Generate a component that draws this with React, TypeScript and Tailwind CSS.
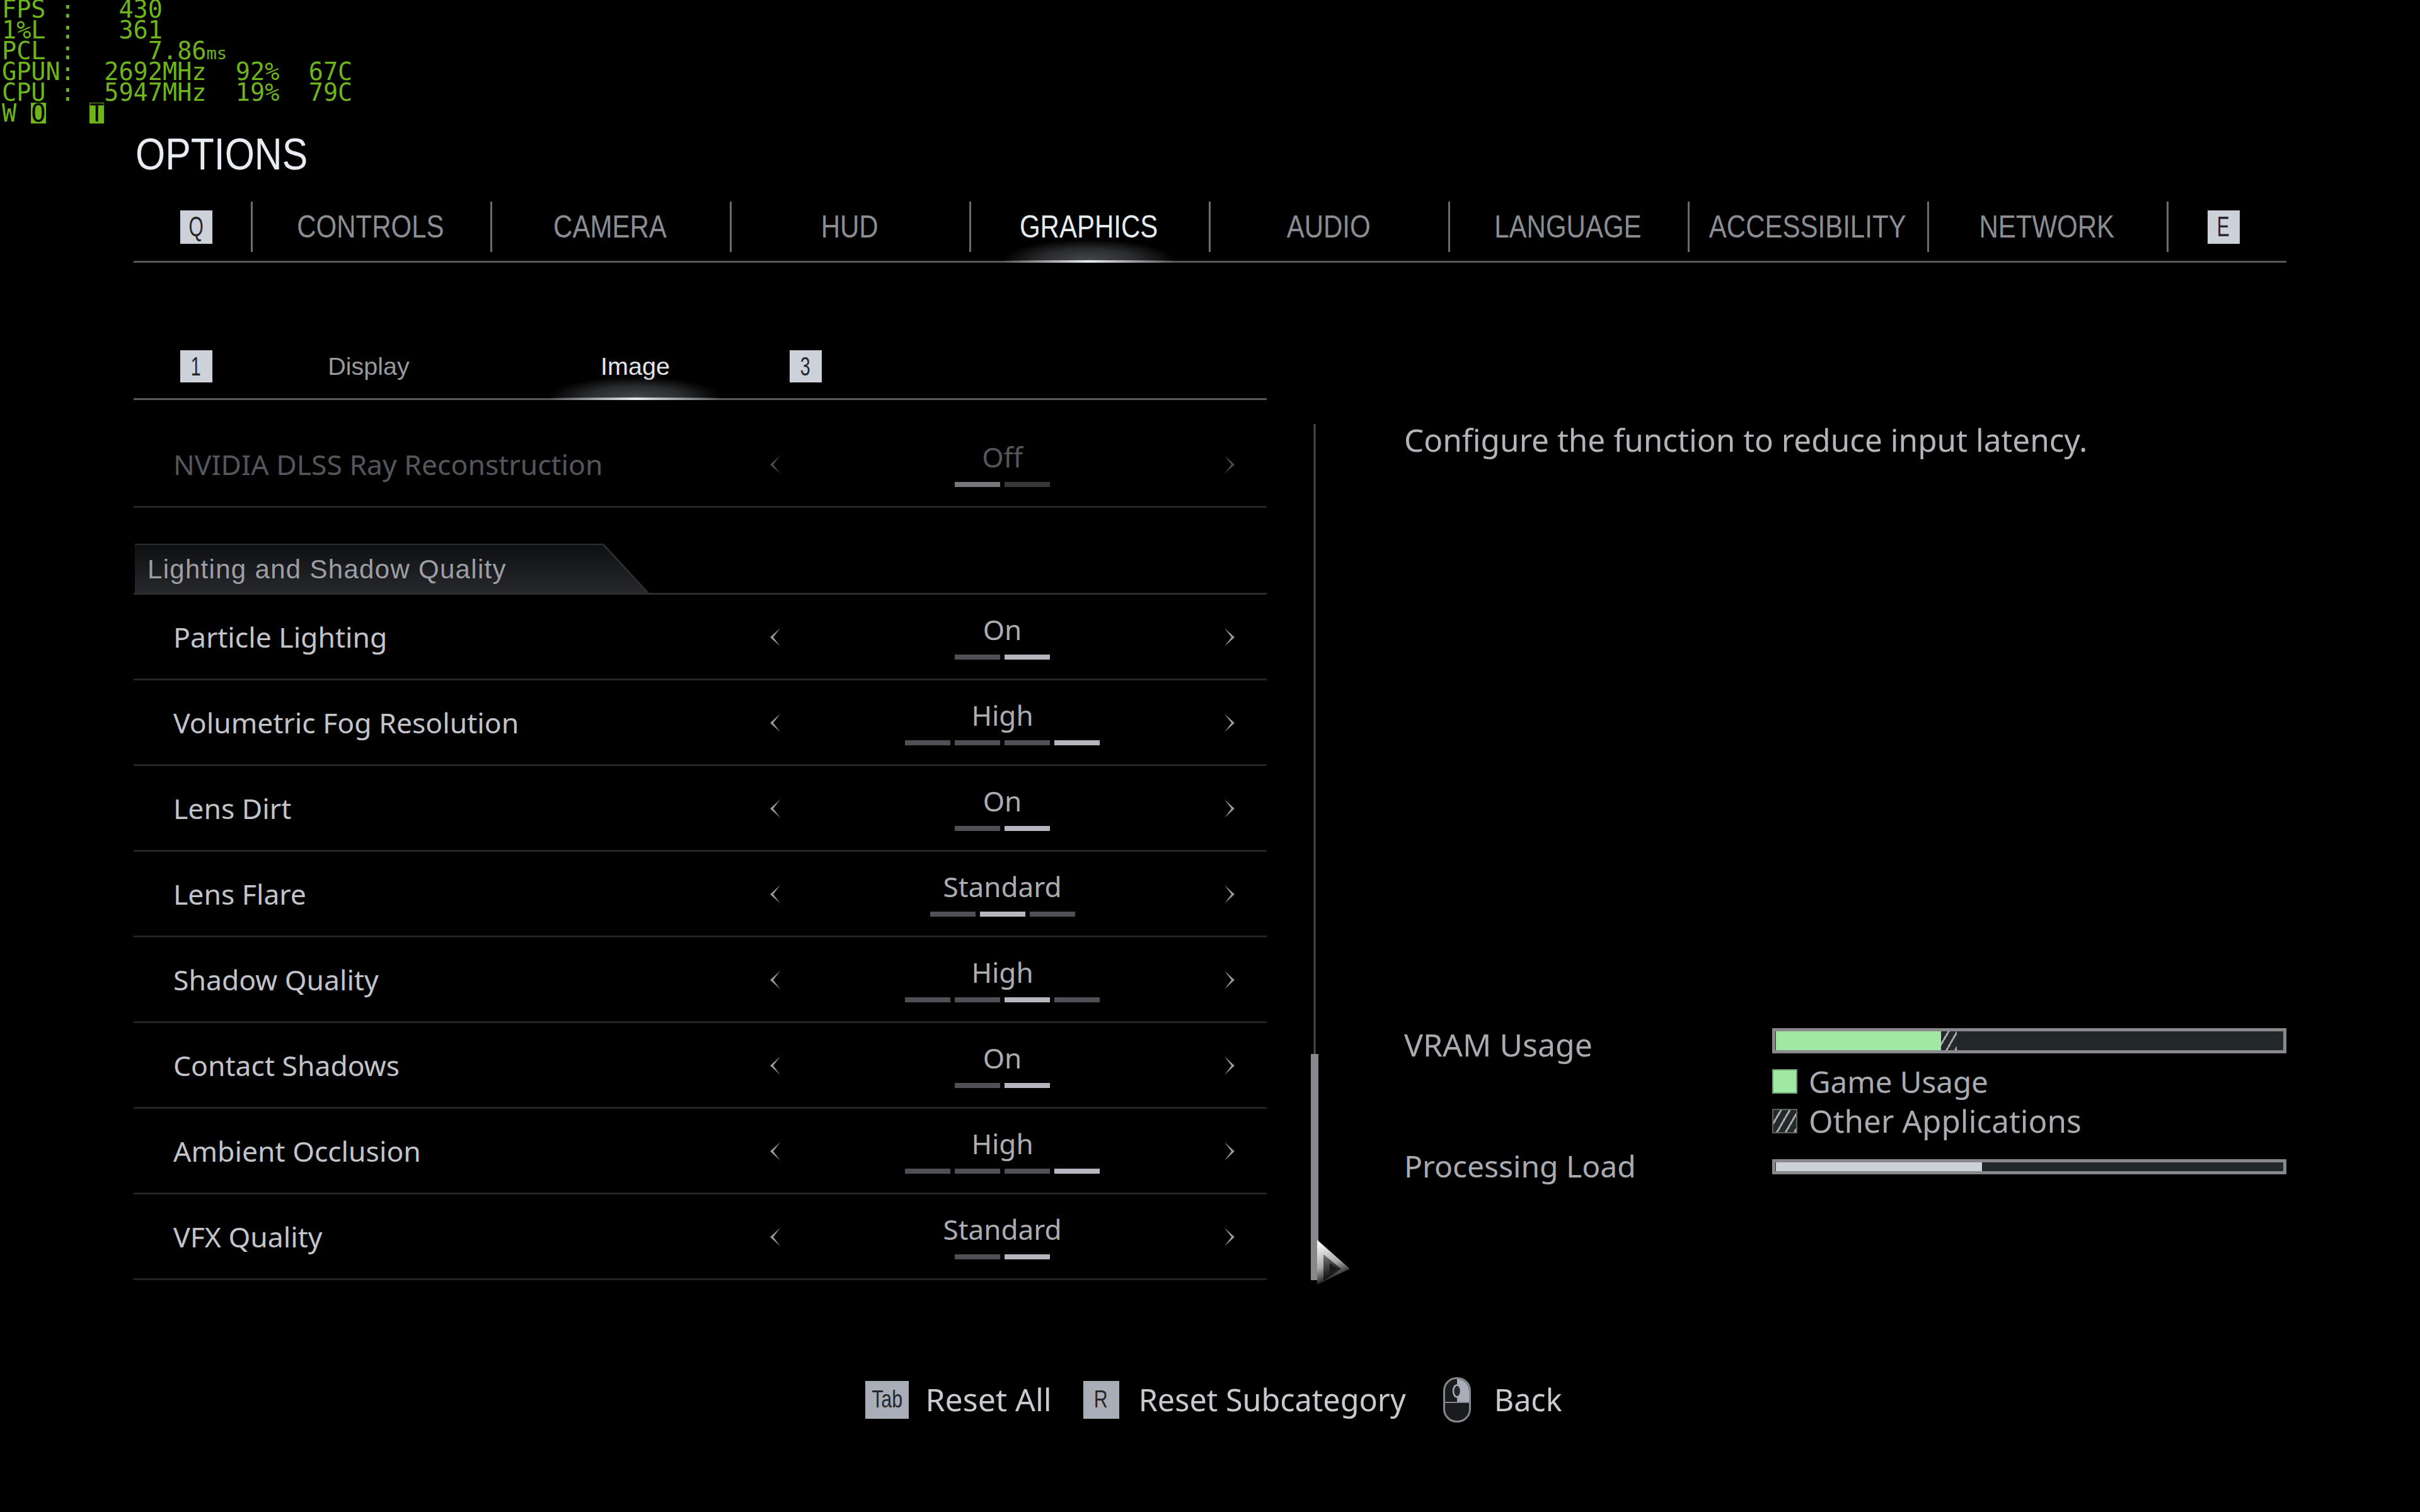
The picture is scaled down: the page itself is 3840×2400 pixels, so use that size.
const SQUARE = "font-['Liberation_Sans',sans-serif]";

const mainTabs = ["CONTROLS", "CAMERA", "HUD", "GRAPHICS", "AUDIO", "LANGUAGE", "ACCESSIBILITY", "NETWORK"];

const rows = [
  { label: "Particle Lighting", value: "On", segs: 2, active: 1 },
  { label: "Volumetric Fog Resolution", value: "High", segs: 4, active: 3 },
  { label: "Lens Dirt", value: "On", segs: 2, active: 1 },
  { label: "Lens Flare", value: "Standard", segs: 3, active: 1 },
  { label: "Shadow Quality", value: "High", segs: 4, active: 2 },
  { label: "Contact Shadows", value: "On", segs: 2, active: 1 },
  { label: "Ambient Occlusion", value: "High", segs: 4, active: 3 },
  { label: "VFX Quality", value: "Standard", segs: 2, active: 1 },
];

function Key({ children, className = "" }: { children: React.ReactNode; className?: string }) {
  return (
    <div className={`${SQUARE} flex items-center justify-center bg-[#cdd1d9] text-[#26282c] ${className}`}>
      <span className="inline-block scale-x-[.68]">{children}</span>
    </div>
  );
}

function Glow() {
  return (
    <>
      <div className="absolute bottom-0 left-1/2 h-[34px] w-[276px] -translate-x-1/2 bg-[radial-gradient(ellipse_50%_100%_at_50%_100%,#48494c_0%,#2a2b2d_55%,transparent_100%)]" />
      <div className="absolute bottom-[-3px] left-1/2 h-[4px] w-[276px] -translate-x-1/2 bg-gradient-to-r from-transparent via-[#e4e9ee] to-transparent" />
    </>
  );
}

function Arrow({ dir, dim }: { dir: "l" | "r"; dim?: boolean }) {
  return (
    <svg width="17" height="29" viewBox="0 0 17 29" className={`mt-[2px] ${dim ? "text-[#4a4a4d]" : "text-[#97989c]"}`}>
      <path
        d={dir === "l" ? "M16 0 L0 14.5 L16 29 L5 14.5 Z" : "M1 0 L17 14.5 L1 29 L12 14.5 Z"}
        fill="currentColor"
      />
    </svg>
  );
}

function Row({ label, value, segs, active, dim }: { label: string; value: string; segs: number; active: number; dim?: boolean }) {
  return (
    <div className="flex h-[136px] items-center border-b-[3px] border-[#202624] pl-[63px] pr-[51px] font-['Noto_Sans',sans-serif]">
      <div className={`flex-1 pt-[2px] text-[44.5px] ${dim ? "text-[#55565a]" : "text-[#c2c4c9]"}`}>{label}</div>
      <div className="flex w-[737px] items-center justify-between">
        <Arrow dir="l" dim={dim} />
        <div className="flex flex-col items-center">
          <div className={`flex h-[48px] items-center text-[44px] ${dim ? "text-[#55565a]" : "text-[#acadb1]"}`}>{value}</div>
          <div className="mt-[16px] flex gap-[7px]">
            {Array.from({ length: segs }).map((_, i) => (
              <div
                key={i}
                className={`h-[8px] w-[72px] ${
                  i === active
                    ? dim ? "bg-[#77777b]" : "bg-[#b6b6be]"
                    : dim ? "bg-[#38383b]" : "bg-[#4f4f55]"
                }`}
              />
            ))}
          </div>
        </div>
        <Arrow dir="r" dim={dim} />
      </div>
    </div>
  );
}

function Hatch({ className = "" }: { className?: string }) {
  return (
    <div className={`bg-[repeating-linear-gradient(120deg,#242a2a_0px,#242a2a_9px,#a6a8ac_9px,#a6a8ac_12px)] ${className}`} />
  );
}

function Osd() {
  return (
    <pre className="absolute left-[3px] top-[-2px] font-['DejaVu_Sans_Mono',monospace] text-[38.5px] leading-[33px] text-[#70b41c]">
      {"FPS :   430\n1%L :   361\nPCL :     7.86"}
      <span className="text-[27px] leading-[0]">ms</span>
      {"\nGPUN:  2692MHz  92%  67C\nCPU :  5947MHz  19%  79C\nW "}
      <span className="inline-block h-[33px] bg-[#70b41c] align-top leading-[33px] text-black">O</span>
      {"   "}
      <span className="inline-block h-[33px] bg-[#70b41c] align-top leading-[33px] text-black">T</span>
    </pre>
  );
}

export default function App() {
  return (
    <div className="relative h-[2400px] w-[3840px] overflow-hidden bg-black">
      <Osd />

      <div className="flex flex-col px-[212px]">
        {/* Title */}
        <div className="mt-[205px] flex h-[80px] items-center">
          <h1 className={`${SQUARE} ml-[3px] origin-left scale-x-[.855] text-[71px] text-[#e8ecf2]`}>OPTIONS</h1>
        </div>

        {/* Top tabs */}
        <div className="mt-[35px] flex h-[97px] border-b-[3px] border-[#57585b]">
          <div className="flex h-[80px] w-[186px] items-center justify-center pl-[12px]">
            <Key className="h-[53px] w-[51px] text-[44px]">Q</Key>
          </div>
          {mainTabs.map((tab) => (
            <div key={tab} className="relative h-[94px] w-[380px]">
              <div className="absolute left-0 top-0 h-[80px] w-[3px] bg-[#6a6b6e]" />
              <div
                className={`${SQUARE} flex h-[80px] items-center justify-center text-[50px] ${
                  tab === "GRAPHICS" ? "text-[#e6ebf0]" : "text-[#8b8d91]"
                }`}
              >
                <span className="inline-block scale-x-[.84]">{tab}</span>
              </div>
              {tab === "GRAPHICS" && <Glow />}
            </div>
          ))}
          <div className="relative h-[80px] flex-1">
            <div className="absolute left-0 top-0 h-[80px] w-[3px] bg-[#6a6b6e]" />
            <div className="flex h-[80px] items-center justify-center pr-[10px]">
              <Key className="h-[53px] w-[51px] text-[44px]">E</Key>
            </div>
          </div>
        </div>

        {/* Sub tabs + content */}
        <div className="flex">
          <div className="w-[1798px]">
            <div className="mt-[139px] flex h-[79px] border-b-[3px] border-[#57585b]">
              <div className="flex h-[51px] w-[186px] items-center justify-center pl-[12px]">
                <Key className="h-[51px] w-[51px] text-[42px]">1</Key>
              </div>
              <div className={`${SQUARE} flex h-[51px] w-[374px] items-center justify-center text-[39.5px] text-[#97999d]`}>
                Display
              </div>
              <div className={`${SQUARE} relative h-[76px] w-[472px] text-[39.5px] text-[#e2e4e8]`}>
                <div className="flex h-[51px] items-center justify-center">Image</div>
                <Glow />
              </div>
              <div className="flex h-[51px] w-[68px] items-center justify-center">
                <Key className="h-[51px] w-[51px] text-[42px]">3</Key>
              </div>
            </div>

            <div className="pt-[35px]">
              <Row label="NVIDIA DLSS Ray Reconstruction" value="Off" segs={2} active={0} dim />

              {/* Section heading */}
              <div className="mt-[57px] border-b-[3px] border-[#2a2d2c]">
                <div className="ml-[2px] h-[78px] w-[816px] bg-[#2d2e31] [clip-path:polygon(0_0,744px_0,816px_100%,0_100%)]">
                  <div
                    className={`${SQUARE} flex h-[78px] items-center bg-gradient-to-b from-[#0e0f11] to-[#26282c] pl-[20px] pt-[3px] text-[42px] tracking-[1.3px] text-[#9c9ea3] [clip-path:polygon(0_2px,742px_2px,812px_100%,0_100%)]`}
                  >
                    Lighting and Shadow Quality
                  </div>
                </div>
              </div>

              {rows.map((r) => (
                <Row key={r.label} {...r} />
              ))}
            </div>
          </div>

          {/* Scrollbar */}
          <div className="relative ml-[70px] mt-[256px] h-[1359px] w-[12px]">
            <div className="absolute inset-y-0 left-1/2 w-[3px] -translate-x-1/2 bg-[#4b4b4f]" />
            <div className="absolute bottom-0 h-[359px] w-full bg-[#88888d]" />
          </div>

          {/* Description and usage */}
          <div className="ml-[136px] flex w-[1400px] flex-col font-['Noto_Sans',sans-serif]">
            <div className="mt-[251px] flex h-[60px] items-center text-[49.5px] text-[#b2b4b9]">
              Configure the function to reduce input latency.
            </div>

            <div className="mt-[904px] grid grid-cols-[584px_816px] text-[48px] text-[#a9abb0]">
              <div className="flex h-[52px] items-center text-[50px]">VRAM Usage</div>
              <div>
                <div className="flex h-[40px] border-[5px] border-[#88888d] bg-[#222727] pl-px">
                  <div className="h-full w-[262px] bg-[#a0e8a4]" />
                  <Hatch className="h-full w-[25px]" />
                </div>
                <div className="mt-[25px] flex h-[39px] items-center gap-[18px]">
                  <div className="h-[39px] w-[40px] border-[2px] border-[#6f9d73] bg-[#a0e8a4]" />
                  <span className="text-[47.5px]">Game Usage</span>
                </div>
                <div className="mt-[24px] flex h-[39px] items-center gap-[18px]">
                  <Hatch className="h-[39px] w-[40px] border-[2px] border-[#5d5f62]" />
                  <span className="text-[49.5px]">Other Applications</span>
                </div>
              </div>
              <div className="mt-[26px] flex h-[52px] items-center">Processing Load</div>
              <div className="mt-[41px] flex h-[24px] border-[5px] border-[#88888d] bg-[#222727] pl-px">
                <div className="h-full w-[327px] bg-[#cdd2d8]" />
              </div>
            </div>
          </div>
        </div>

        {/* Footer actions */}
        <div className="mt-[154px] flex h-[71px] items-center justify-center pl-[12px] font-['Noto_Sans',sans-serif] text-[48.5px] text-[#c8cacf]">
          <div className={`${SQUARE} flex h-[60px] w-[69px] items-center justify-center bg-[#a9adb7] text-[38px] text-[#26282c]`}>
            <span className="inline-block scale-x-[.8]">Tab</span>
          </div>
          <span className="ml-[26px] text-[50px]">Reset All</span>
          <div className={`${SQUARE} ml-[50px] flex h-[60px] w-[57px] items-center justify-center bg-[#a9adb7] text-[38px] text-[#26282c]`}>
            <span className="inline-block scale-x-[.8]">R</span>
          </div>
          <span className="ml-[31px]">Reset Subcategory</span>
          <svg width="44" height="72" viewBox="0 0 44 72" className="ml-[59px]">
            <rect x="1.5" y="1.5" width="41" height="69" rx="20" fill="#1a1b1e" stroke="#85878c" strokeWidth="3" />
            <path d="M22 3 A19 19 0 0 1 41 21 V39 H22 Z" fill="#a9adb7" />
            <ellipse cx="22" cy="22" rx="6" ry="9.5" fill="#26272a" stroke="#a9adb7" strokeWidth="2.5" />
            <path d="M3 40 H41" stroke="#85878c" strokeWidth="2" />
          </svg>
          <span className="ml-[37px]">Back</span>
        </div>
      </div>

      {/* Mouse cursor */}
      <svg width="56" height="72" viewBox="0 0 56 72" className="absolute left-[2088px] top-[1967px]">
        <defs>
          <linearGradient id="cursorOuter" x1="0.1" y1="0.1" x2="0.35" y2="1">
            <stop offset="0" stopColor="#f4f4f4" />
            <stop offset="0.55" stopColor="#a8a8a8" />
            <stop offset="1" stopColor="#000000" />
          </linearGradient>
          <linearGradient id="cursorInner" x1="0.1" y1="0" x2="0.4" y2="1">
            <stop offset="0" stopColor="#777777" />
            <stop offset="1" stopColor="#000000" />
          </linearGradient>
        </defs>
        <path d="M2 1 L54 47 L2 72 Z" fill="url(#cursorOuter)" />
        <path d="M12 24 L40 47 L12 66 Z" fill="url(#cursorInner)" />
        <path d="M22 38 L34 47 L22 56 Z" fill="#1a1a1a" />
      </svg>
    </div>
  );
}
